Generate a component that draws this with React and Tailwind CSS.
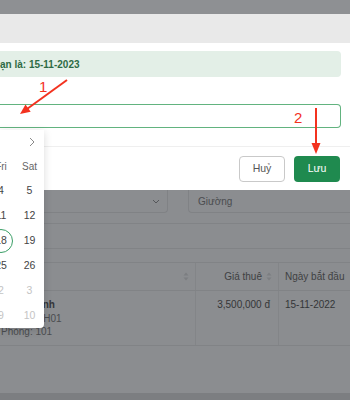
const weeks = [
  [{ d: "4" }, { d: "5" }],
  [{ d: "11" }, { d: "12" }],
  [{ d: "18", selected: true }, { d: "19" }],
  [{ d: "25" }, { d: "26" }],
  [{ d: "2", muted: true }, { d: "3", muted: true }],
  [{ d: "9", muted: true }, { d: "10", muted: true }],
];

function DatePopup() {
  return (
    <div className="absolute left-0 top-[130px] w-[44px] h-[198px] bg-white rounded-br-[4px] shadow-[0_2px_8px_rgba(0,0,0,0.15)] overflow-hidden">
      <div className="h-[24px] flex items-center justify-end pr-[9px]">
        <svg width="6" height="10" viewBox="0 0 6 10" fill="none">
          <path d="M1 1l4 4-4 4" stroke="#8a8a8a" strokeWidth="1" />
        </svg>
      </div>
      <div className="-ml-[13px] grid grid-cols-[28px_29px] text-[10px] text-[#666]">
        <div className="h-[24px] flex items-center justify-center">Fri</div>
        <div className="h-[24px] flex items-center justify-center">Sat</div>
        {weeks.map((w, i) =>
          w.map((c, j) => (
            <div key={i + "-" + j} className="h-[25px] flex items-center justify-center">
              <span
                className={`w-[24px] h-[24px] flex items-center justify-center rounded-full text-[10.5px] ${
                  c.selected ? "border border-[#3a9e66]" : ""
                } ${c.muted ? "text-[#c4c4c4]" : "text-[#444]"}`}
              >
                {c.d}
              </span>
            </div>
          ))
        )}
      </div>
    </div>
  );
}

function Annotations() {
  return (
    <>
      <svg className="absolute left-0 top-0 pointer-events-none" width="350" height="400">
        <line x1="67" y1="80" x2="27" y2="109" stroke="#f3321f" strokeWidth="2" />
        <polygon points="20,114 30.7,111.8 25.5,104.5" fill="#f3321f" />
        <line x1="316" y1="108" x2="316" y2="145" stroke="#f3321f" strokeWidth="2" />
        <polygon points="316,154 311.5,143 320.5,143" fill="#f3321f" />
      </svg>
      <span className="absolute left-[39px] top-[79px] text-[15px] leading-none text-[#f3321f]">1</span>
      <span className="absolute left-[294px] top-[110px] text-[15px] leading-none text-[#f3321f]">2</span>
    </>
  );
}

function SortIcon() {
  return (
    <svg width="6" height="9" viewBox="0 0 6 9" className="shrink-0">
      <path d="M3 0.5L5.5 3.5H0.5z" fill="#7c7e81" />
      <path d="M3 8.5L5.5 5.5H0.5z" fill="#7c7e81" />
    </svg>
  );
}

export default function App() {
  return (
    <div className="relative w-[350px] h-[400px] overflow-hidden bg-[#8b8d90] font-['Liberation_Sans',Arial,sans-serif]">
      <div className="h-[14px] bg-[#8e9093]" />

      {/* modal */}
      <div className="bg-white">
        <div className="h-[29px] bg-[#e9e9e9]" />
        <div className="pt-[8px] pr-[9px]">
          <div className="h-[26px] rounded-r-[4px] bg-[#e3efe7] flex items-center text-[10px] text-[#2e6b45] whitespace-nowrap">
            <span className="font-semibold">
              ạn là: <b>15-11-2023</b>
            </span>
          </div>
          <div className="h-[27px]" />
          <div className="h-[24px] border border-l-0 border-[#62b37f] rounded-r-[4px]" />
          <div className="h-[18px]" />
        </div>
        <div className="h-[44px] border-t border-[#efefef] flex justify-end items-start gap-[9px] pt-[9px] pr-[10px]">
          <button className="w-[46px] h-[26px] rounded-[4px] border border-[#c9c9c9] bg-white text-[10.5px] text-[#555]">
            Huỷ
          </button>
          <button className="w-[46px] h-[26px] rounded-[4px] bg-[#1f8a4f] text-[10.5px] text-white">
            Lưu
          </button>
        </div>
      </div>

      {/* page behind the overlay */}
      <div className="flex gap-[20px] h-[23px]">
        <div className="w-[168px] border-r border-b border-[#808285] rounded-br-[4px] flex items-center justify-end pr-[7px]">
          <svg width="8" height="5" viewBox="0 0 8 5" fill="none">
            <path d="M1 1l3 3 3-3" stroke="#55575a" strokeWidth="1" />
          </svg>
        </div>
        <div className="flex-1 border-l border-b border-[#808285] rounded-bl-[4px] flex items-center pl-[9px] text-[10px] text-[#4a4c4f]">
          Giường
        </div>
      </div>
      <div className="mt-[10px] h-[26px] border-y border-[#818386]" />
      <div className="mt-[13px] border-t border-b border-[#818386] text-[10px]">
        <div className="grid grid-cols-[196px_83px_1fr] h-[28px] border-b border-[#818386] text-[#3f4143]">
          <div className="flex items-center justify-end pr-[6px] border-r border-[#838588]">
            <SortIcon />
          </div>
          <div className="flex items-center justify-end gap-[4px] pr-[6px] border-r border-[#838588]">
            <span>Giá thuê</span>
            <SortIcon />
          </div>
          <div className="flex items-center pl-[6px] whitespace-nowrap">Ngày bắt đầu</div>
        </div>
        <div className="grid grid-cols-[196px_83px_1fr] h-[54px] text-[#343638]">
          <div className="pl-[1px] pt-[7px] leading-[13.5px] border-r border-[#838588] whitespace-nowrap">
            <div className="font-bold">Trần Thanh</div>
            <div className="text-[#4a4c4f]">Tòa nhà: H01</div>
            <div className="text-[#4a4c4f]">Phòng: 101</div>
          </div>
          <div className="pt-[7px] leading-[14px] text-right pr-[8px] border-r border-[#838588]">
            3,500,000 đ
          </div>
          <div className="pt-[7px] leading-[14px] pl-[6px]">15-11-2022</div>
        </div>
      </div>
      <div className="absolute left-0 bottom-0 w-full h-[7px] bg-[#7c7e81]" />

      <DatePopup />
      <Annotations />
    </div>
  );
}
